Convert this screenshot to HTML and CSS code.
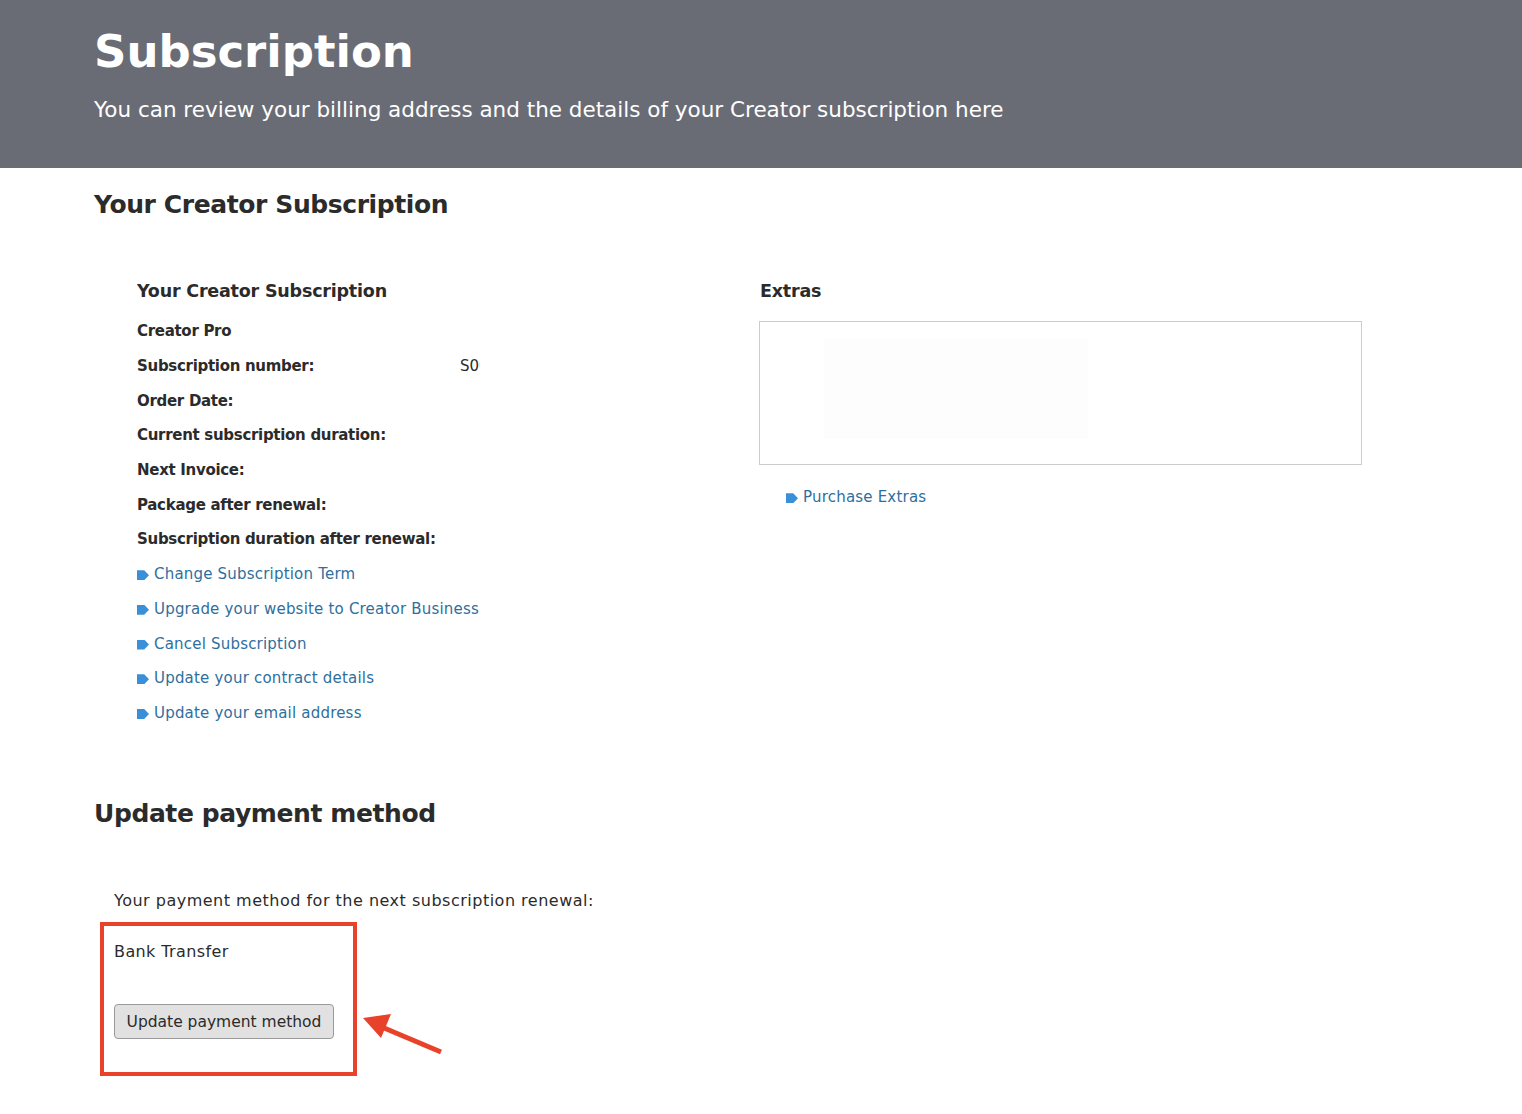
FILE: index.html
```html
<!DOCTYPE html>
<html lang="en">
<head>
<meta charset="utf-8">
<title>Subscription</title>
<link rel="stylesheet" href="styles.css">
</head>
<body>
<header class="hero">
  <h1 class="hero-title">Subscription</h1>
  <p class="hero-sub">You can review your billing address and the details of your Creator subscription here</p>
</header>
<main class="content">
  <h2 class="section-title">Your Creator Subscription</h2>
  <div class="columns">
    <section class="col-left">
      <h3 class="col-title">Your Creator Subscription</h3>
      <div class="row"><span class="label">Creator Pro</span></div>
      <div class="row"><span class="label">Subscription number:</span><span class="value">S0012345</span></div>
      <div class="row"><span class="label">Order Date:</span></div>
      <div class="row"><span class="label">Current subscription duration:</span></div>
      <div class="row"><span class="label">Next Invoice:</span></div>
      <div class="row"><span class="label">Package after renewal:</span></div>
      <div class="row"><span class="label">Subscription duration after renewal:</span></div>
      <ul class="links">
        <li><a href="#">Change Subscription Term</a></li>
        <li><a href="#">Upgrade your website to Creator Business</a></li>
        <li><a href="#">Cancel Subscription</a></li>
        <li><a href="#">Update your contract details</a></li>
        <li><a href="#">Update your email address</a></li>
      </ul>
    </section>
    <section class="col-right">
      <h3 class="col-title">Extras</h3>
      <div class="extras-box"><div class="extras-inner"></div></div>
      <ul class="links links-extras">
        <li><a href="#">Purchase Extras</a></li>
      </ul>
    </section>
  </div>
  <h2 class="section-title payment-title">Update payment method</h2>
  <p class="payment-intro">Your payment method for the next subscription renewal:</p>
  <div class="payment-wrap">
    <div class="highlight">
      <p class="method">Bank Transfer</p>
      <button class="btn" type="button">Update payment method</button>
    </div>
    <svg class="arrow" width="90" height="50" viewBox="0 0 90 50">
      <line x1="82" y1="42" x2="18" y2="15" stroke="#e8432a" stroke-width="5"/>
      <polygon points="4,8 32,4 22,28" fill="#e8432a"/>
    </svg>
  </div>
</main>
</body>
</html>
```
FILE: styles.css
```css
* { box-sizing: border-box; }
body {
  margin: 0;
  font-family: "DejaVu Sans", "Liberation Sans", sans-serif;
  color: #2b2b2b;
  background: #fff;
}
.hero {
  background: #6a6c75;
  height: 168px;
  padding: 24px 94px 0;
  color: #fff;
}
.hero-title {
  margin: 0;
  font-size: 45px;
  line-height: 56px;
  font-weight: bold;
}
.hero-sub {
  margin: 15px 0 0;
  font-size: 21.5px;
  line-height: 30px;
}
.content {
  padding: 0 94px;
}
.section-title {
  margin: 18px 0 0;
  font-size: 25px;
  line-height: 38px;
  letter-spacing: -0.4px;
  font-weight: bold;
  color: #2b2b2b;
}
.columns {
  display: flex;
  padding-top: 53px;
}
.col-left {
  width: 343px;
  margin-left: 43px;
  overflow: hidden;
}
.col-right {
  margin-left: 280px;
  width: 602px;
}
.col-title {
  margin: 0 0 9px;
  font-size: 17.5px;
  line-height: 28px;
  letter-spacing: -0.2px;
  font-weight: bold;
  color: #2b2b2b;
}
.row {
  display: flex;
  height: 34.7px;
  align-items: center;
  font-size: 15px;
  white-space: nowrap;
}
.label {
  font-weight: bold;
  font-size: 15px;
  letter-spacing: -0.3px;
  width: 323px;
  flex: none;
}
.value { color: #2b2b2b; }
.links {
  list-style: none;
  margin: 0;
  padding: 0;
}
.links li {
  height: 34.7px;
  display: flex;
  align-items: center;
  font-size: 15px;
  white-space: nowrap;
}
.links li::before {
  content: "";
  width: 12px;
  height: 10px;
  margin-right: 5px;
  margin-top: 2px;
  background: #3a8fd9;
  clip-path: polygon(0 0, 60% 0, 100% 50%, 60% 100%, 0 100%);
  flex: none;
}
.links a {
  color: #2e6f9e;
  text-decoration: none;
  letter-spacing: 0.2px;
}
.extras-box {
  border: 1px solid #cccccc;
  height: 144px;
  margin-left: -1px;
  margin-top: 16px;
  padding: 17px 0 0 64px;
}
.extras-inner {
  width: 264px;
  height: 100px;
  background: #fdfdfd;
}
.links-extras {
  margin: 15px 0 0 26px;
}
.payment-title {
  margin-top: 65px;
}
.payment-intro {
  margin: 56px 0 0 20px;
  font-size: 16px;
  line-height: 24px;
  letter-spacing: 0.5px;
}
.payment-wrap {
  display: flex;
  align-items: flex-start;
  margin-top: 9px;
  margin-left: 6px;
}
.highlight {
  width: 257px;
  height: 154px;
  border: 4px solid #e8432a;
  padding: 14px 0 0 10px;
}
.method {
  margin: 0;
  font-size: 16px;
  line-height: 24px;
  letter-spacing: 0.4px;
}
.btn {
  margin-top: 40px;
  width: 220px;
  height: 35px;
  background: #e1e1e1;
  border: 1px solid #9a9a9a;
  border-radius: 4px;
  font-family: "DejaVu Sans", sans-serif;
  font-size: 15.5px;
  color: #2b2b2b;
  padding: 0;
}
.arrow {
  margin: 88px 0 0 2px;
}
```
